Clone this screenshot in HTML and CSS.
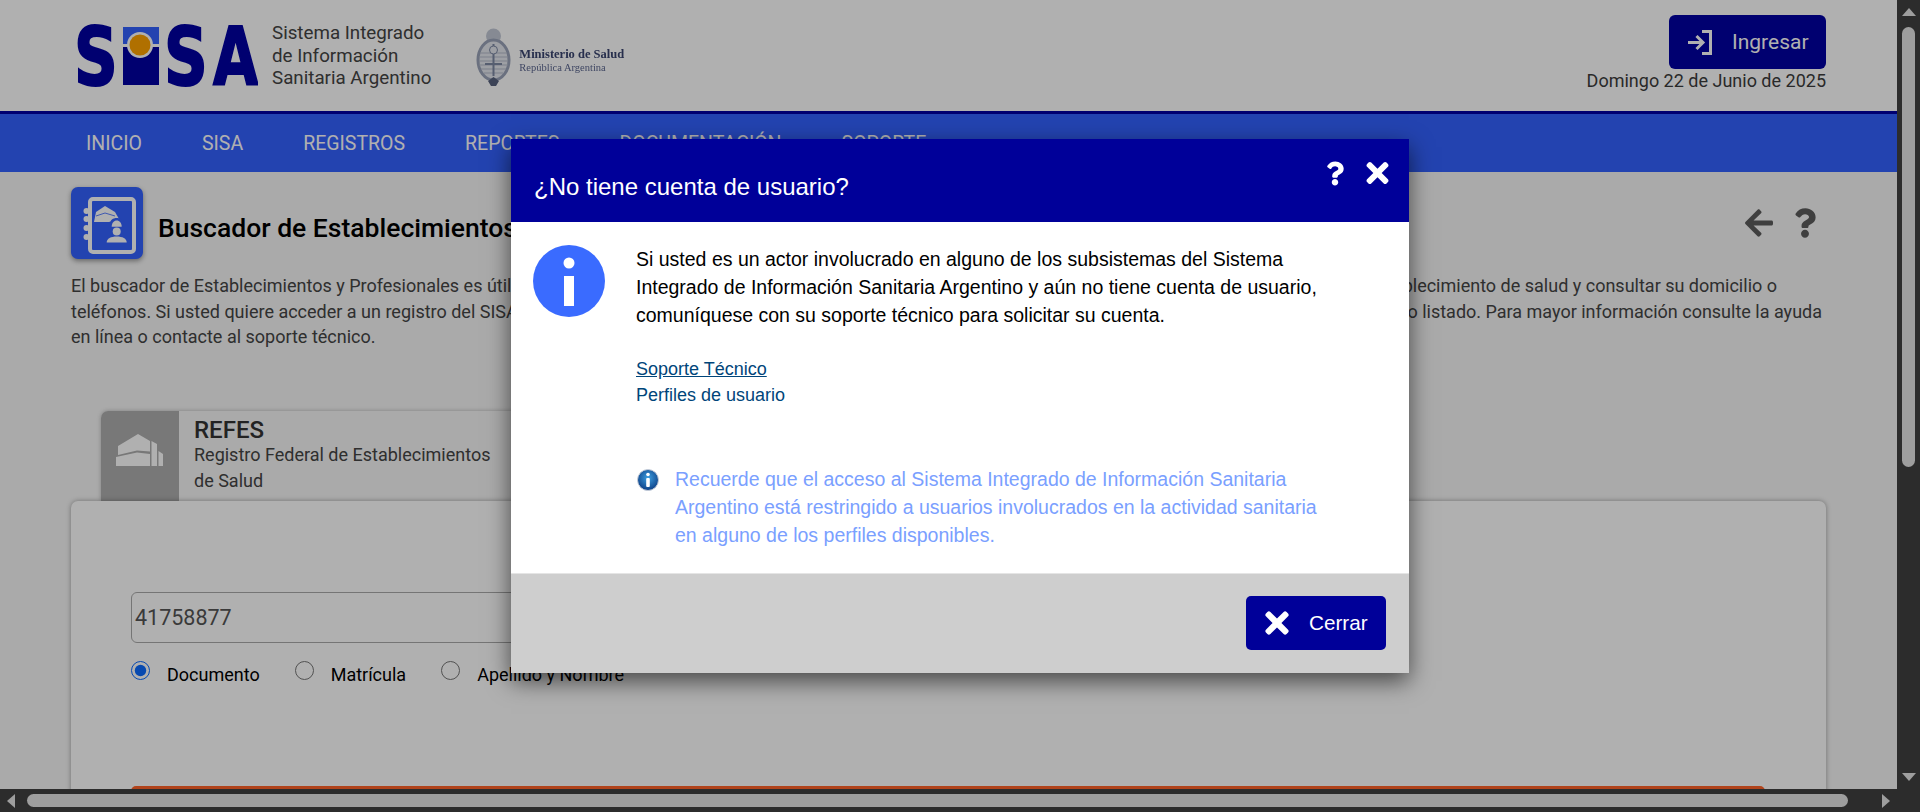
FILE: index.html
```html
<!DOCTYPE html>
<html>

<head>
    <meta charset="utf-8" />
    <title>SISA</title>
    <link rel="stylesheet" href="styles.css">
</head>

<body>
    <div class="ventana">
        <div class="pagina">
            <header class="cabecera">
                <div class="marca">
                    <svg class="logo-sisa" viewBox="-4 -20 185 100" width="185" height="100">
                        <text class="logo-letra" transform="translate(-3 59) scale(0.76 1)">S</text>
                        <rect x="46" y="1" width="36" height="17" fill="#3461ff" />
                        <rect x="46" y="21" width="36" height="38" fill="#0000a2" />
                        <circle cx="63" cy="19" r="13" fill="#fff" />
                        <circle cx="63" cy="19" r="10.5" fill="#ffa200" />
                        <text class="logo-letra" transform="translate(87 59) scale(0.76 1)">S</text>
                        <text class="logo-letra" transform="translate(136 59) scale(0.73 1)">A</text>
                    </svg>
                    <div class="marca-texto">Sistema Integrado<br>de Información<br>Sanitaria Argentino</div>
                    <div class="ministerio">
                        <svg viewBox="0 0 35 59" width="35" height="59">
                            <circle cx="17.5" cy="8" r="7.5" fill="#c3c9d6" />
                            <ellipse cx="17.5" cy="32" rx="15.5" ry="20" fill="#e4e7ee" stroke="#9aa3b8" stroke-width="3" />
                            <path d="M4 25H31M3 29H32M3 33H32M3 37H32M5 41H30M8 45H27" stroke="#b3bac9" />
                            <path d="M17.5 16V48M9 36H26" stroke="#7d88a3" stroke-width="2" />
                            <circle cx="17.5" cy="22" r="4" fill="#e4e7ee" stroke="#7d88a3" />
                            <path d="M12 53L17.5 49L23 53L20 58H15Z" fill="#57617d" />
                        </svg>
                        <div class="ministerio-texto">
                            <div class="ministerio-nombre">Ministerio de Salud</div>
                            <div class="ministerio-pais">República Argentina</div>
                        </div>
                    </div>
                </div>
                <div class="sesion">
                    <a class="boton-ingresar">
                        <svg viewBox="0 0 25 25" width="25" height="25" fill="none" stroke="#fff" stroke-width="3">
                            <path d="M1 12.5H15M9.5 6L16 12.5L9.5 19" />
                            <path d="M15 1.5H23.5V23.5H15" />
                        </svg>
                        Ingresar
                    </a>
                    <div class="fecha">Domingo 22 de Junio de 2025</div>
                </div>
            </header>

            <nav class="menu">
                <a>INICIO</a>
                <a>SISA</a>
                <a>REGISTROS</a>
                <a>REPORTES</a>
                <a>DOCUMENTACIÓN</a>
                <a>SOPORTE</a>
            </nav>

            <main class="contenido">
                <div class="titulo-fila">
                    <div class="titulo-icono">
                        <svg viewBox="0 0 72 72" width="72" height="72">
                            <rect x="19" y="12" width="44" height="53" rx="3" fill="none" stroke="#fff" stroke-width="4" />
                            <circle cx="15.5" cy="24" r="3" fill="#fff" />
                            <circle cx="15.5" cy="32" r="3" fill="#fff" />
                            <circle cx="15.5" cy="41" r="3" fill="#fff" />
                            <circle cx="15.5" cy="50" r="3" fill="#fff" />
                            <path d="M23 35L25 25L34 19L44 25L48 32L38 35Z" fill="#fff" />
                            <path d="M25 29L34 26L44 29" fill="none" stroke="#3461ff" stroke-width="0.8" />
                            <path d="M39 40.5V37C39 33 42 31 45.7 31C49.5 31 52.5 33 52.5 37V40.5Z" fill="#3461ff" />
                            <path d="M40.7 39.7C40.7 36 43 33.5 45.7 33.5C48.5 33.5 50.7 36 50.7 39.7Z" fill="#fff" />
                            <circle cx="45.7" cy="44.5" r="4" fill="#fff" />
                            <path d="M35.7 55.5C35.7 51.5 40 49.5 45.7 49.5C51.5 49.5 55.7 51.5 55.7 55.5Z" fill="#fff" />
                        </svg>
                    </div>
                    <h1 class="titulo">Buscador de Establecimientos y Profesionales</h1>
                    <div class="titulo-acciones">
                        <svg viewBox="0 0 448 512" width="28" height="32">
                            <path fill="#5c5c5c" d="M257.5 445.1l-22.2 22.2c-9.4 9.4-24.6 9.4-33.9 0L7 273c-9.4-9.4-9.4-24.6 0-33.9L201.4 44.7c9.4-9.4 24.6-9.4 33.9 0l22.2 22.2c9.5 9.5 9.3 25-.4 34.3L136.6 216H424c13.3 0 24 10.7 24 24v32c0 13.3-10.7 24-24 24H136.6l120.5 114.8c9.8 9.3 10 24.8.4 34.3z" />
                        </svg>
                        <svg viewBox="0 0 384 512" width="22" height="30">
                            <path fill="#5c5c5c" d="M202.021 0C122.202 0 70.503 32.703 29.914 91.026c-7.363 10.58-5.093 25.086 5.178 32.874l43.138 32.709c10.373 7.865 25.132 6.026 33.253-4.148 25.049-31.381 43.63-49.449 82.757-49.449 30.764 0 68.816 19.799 68.816 49.631 0 22.552-18.617 34.134-48.993 51.164-35.423 19.86-82.299 44.576-82.299 106.405V320c0 13.255 10.745 24 24 24h72.471c13.255 0 24-10.745 24-24v-5.773c0-42.86 125.268-44.645 125.268-160.627C377.504 66.256 286.902 0 202.021 0zM192 373.459c-38.196 0-69.271 31.075-69.271 69.271 0 38.195 31.075 69.27 69.271 69.27s69.271-31.075 69.271-69.271-31.075-69.27-69.271-69.27z" />
                        </svg>
                    </div>
                </div>

                <div class="intro">
                    <div class="intro-linea linea-1"><span>El buscador de Establecimientos y Profesionales es útil</span><span>blecimiento de salud y consultar su domicilio o</span></div>
                    <div class="intro-linea linea-2"><span>teléfonos. Si usted quiere acceder a un registro del SISA</span><span>o listado. Para mayor información consulte la ayuda</span></div>
                    <div class="intro-linea"><span>en línea o contacte al soporte técnico.</span></div>
                </div>

                <div class="pestana">
                    <div class="pestana-icono">
                        <svg viewBox="0 0 78 90" width="78" height="90">
                            <path d="M17 35L37 23L49 30V40.5L36 39.5L17 44Z" fill="#fff" />
                            <path d="M15 46L36 41.5L49 43V55H15Z" fill="#fff" />
                            <path d="M50.5 30L56 33V55H50.5Z" fill="#fff" />
                            <path d="M57.5 40L62 43V55H57.5Z" fill="#fff" />
                        </svg>
                    </div>
                    <div class="pestana-texto">
                        <div class="pestana-nombre">REFES</div>
                        <div>Registro Federal de Establecimientos<br>de Salud</div>
                    </div>
                </div>

                <section class="tarjeta">
                    <input class="campo" value="41758877">
                    <div class="opciones">
                        <label class="opcion"><input type="radio" name="tipo" checked>Documento</label>
                        <label class="opcion"><input type="radio" name="tipo">Matrícula</label>
                        <label class="opcion"><input type="radio" name="tipo">Apellido y Nombre</label>
                    </div>
                    <div class="boton-buscar"></div>
                </section>
            </main>

            <div class="velo"></div>

            <div class="modal">
                <div class="modal-cabecera">
                    <h2 class="modal-titulo">¿No tiene cuenta de usuario?</h2>
                    <div class="modal-acciones">
                        <svg viewBox="0 0 384 512" width="18" height="25">
                            <path fill="#fff" d="M202.021 0C122.202 0 70.503 32.703 29.914 91.026c-7.363 10.58-5.093 25.086 5.178 32.874l43.138 32.709c10.373 7.865 25.132 6.026 33.253-4.148 25.049-31.381 43.63-49.449 82.757-49.449 30.764 0 68.816 19.799 68.816 49.631 0 22.552-18.617 34.134-48.993 51.164-35.423 19.86-82.299 44.576-82.299 106.405V320c0 13.255 10.745 24 24 24h72.471c13.255 0 24-10.745 24-24v-5.773c0-42.86 125.268-44.645 125.268-160.627C377.504 66.256 286.902 0 202.021 0zM192 373.459c-38.196 0-69.271 31.075-69.271 69.271 0 38.195 31.075 69.27 69.271 69.27s69.271-31.075 69.271-69.271-31.075-69.27-69.271-69.27z" />
                        </svg>
                        <svg viewBox="0 0 352 512" width="23" height="32">
                            <path fill="#fff" d="M242.72 256l100.07-100.07c12.28-12.28 12.28-32.19 0-44.48l-22.24-22.24c-12.28-12.28-32.19-12.28-44.48 0L176 189.28 75.93 89.21c-12.28-12.28-32.19-12.28-44.48 0L9.21 111.45c-12.28 12.28-12.28 32.19 0 44.48L109.28 256 9.21 356.07c-12.28 12.28-12.28 32.19 0 44.48l22.24 22.24c12.28 12.28 32.2 12.28 44.48 0L176 322.72l100.07 100.07c12.28 12.28 32.2 12.28 44.48 0l22.24-22.24c12.28-12.28 12.28-32.19 0-44.48L242.72 256z" />
                        </svg>
                    </div>
                </div>
                <div class="modal-cuerpo">
                    <svg class="info-grande" viewBox="0 0 72 72" width="72" height="72">
                        <circle cx="36" cy="36" r="36" fill="#3a6bff" />
                        <circle cx="36" cy="18" r="5.5" fill="#fff" />
                        <rect x="31" y="31" width="10" height="30" fill="#fff" />
                    </svg>
                    <div class="modal-contenido">
                        <p class="modal-mensaje">Si usted es un actor involucrado en alguno de los subsistemas del Sistema Integrado de Información Sanitaria Argentino y aún no tiene cuenta de usuario, comuníquese con su soporte técnico para solicitar su cuenta.</p>
                        <div class="modal-enlaces">
                            <a class="enlace-subrayado">Soporte Técnico</a>
                            <a>Perfiles de usuario</a>
                        </div>
                        <div class="modal-aviso">
                            <svg class="info-chica" viewBox="0 0 24 24" width="24" height="24">
                                <defs>
                                    <radialGradient id="brillo" cx="50%" cy="40%" r="60%">
                                        <stop offset="0" stop-color="#3d9ee0" />
                                        <stop offset="1" stop-color="#0c3f86" />
                                    </radialGradient>
                                </defs>
                                <circle cx="12" cy="12" r="10.5" fill="url(#brillo)" stroke="#c5ccd8" />
                                <circle cx="12" cy="6.5" r="1.8" fill="#fff" />
                                <rect x="10.2" y="10" width="3.6" height="9" rx="1" fill="#fff" />
                            </svg>
                            <p>Recuerde que el acceso al Sistema Integrado de Información Sanitaria Argentino está restringido a usuarios involucrados en la actividad sanitaria en alguno de los perfiles disponibles.</p>
                        </div>
                    </div>
                </div>
                <div class="modal-pie">
                    <a class="boton-cerrar">
                        <svg viewBox="0 0 352 512" width="24" height="34">
                            <path fill="#fff" d="M242.72 256l100.07-100.07c12.28-12.28 12.28-32.19 0-44.48l-22.24-22.24c-12.28-12.28-32.19-12.28-44.48 0L176 189.28 75.93 89.21c-12.28-12.28-32.19-12.28-44.48 0L9.21 111.45c-12.28 12.28-12.28 32.19 0 44.48L109.28 256 9.21 356.07c-12.28 12.28-12.28 32.19 0 44.48l22.24 22.24c12.28 12.28 32.2 12.28 44.48 0L176 322.72l100.07 100.07c12.28 12.28 32.2 12.28 44.48 0l22.24-22.24c12.28-12.28 12.28-32.19 0-44.48L242.72 256z" />
                        </svg>
                        Cerrar
                    </a>
                </div>
            </div>
        </div>

        <div class="barra-v">
            <span class="flecha flecha-arriba"></span>
            <span class="pulgar-v"></span>
            <span class="flecha flecha-abajo"></span>
        </div>
        <div class="barra-h">
            <span class="flecha flecha-izq"></span>
            <span class="pulgar-h"></span>
            <span class="flecha flecha-der"></span>
        </div>
        <div class="esquina"></div>
    </div>
</body>

</html>
```

FILE: styles.css
```css
* {
    box-sizing: border-box;
}

body {
    margin: 0;
    overflow: hidden;
    font-family: Roboto, sans-serif;
}

.ventana {
    display: grid;
    grid-template-columns: 1897px 23px;
    grid-template-rows: 789px 23px;
    width: 1920px;
    height: 812px;
    background-color: #2c2c2c;
}

.pagina {
    position: relative;
    overflow: hidden;
    background-color: #f6f6f6;
}

/* cabecera */
.cabecera {
    display: flex;
    justify-content: space-between;
    height: 114px;
    padding: 0 71px 0 73px;
    background-color: #fff;
    border-bottom: 3px solid #0000a2;
}

.marca {
    display: flex;
    align-items: flex-start;
    padding-top: 26px;
}

.logo-sisa {
    margin-top: -20px;
}

.logo-letra {
    font-family: "DejaVu Sans", sans-serif;
    font-weight: bold;
    font-size: 80px;
    fill: #0000a2;
    stroke: #0000a2;
    stroke-width: 2px;
}

.marca-texto {
    margin-left: 14px;
    margin-top: -4px;
    font-size: 18.75px;
    line-height: 22.5px;
    color: #444;
}

.ministerio {
    display: flex;
    align-items: center;
    margin-left: 45px;
    margin-top: 2px;
    filter: blur(0.4px);
}

.ministerio-texto {
    margin-left: 8px;
    padding-top: 4px;
    font-family: "Liberation Serif", serif;
    color: #3a4570;
}

.ministerio-nombre {
    font-size: 12.5px;
    font-weight: bold;
}

.ministerio-pais {
    font-size: 10.5px;
    color: #5d6890;
}

.sesion {
    display: flex;
    flex-direction: column;
    align-items: flex-end;
    padding-top: 15px;
}

.boton-ingresar {
    display: flex;
    align-items: center;
    gap: 20px;
    width: 157px;
    height: 54px;
    padding-left: 18px;
    border-radius: 6px;
    background-color: #0000a2;
    color: #fff;
    font-size: 21px;
}

.fecha {
    margin-top: 1px;
    font-size: 18px;
    line-height: 22px;
    color: #3c3c3c;
}

/* menu */
.menu {
    display: flex;
    align-items: center;
    gap: 60px;
    height: 58px;
    padding-left: 86px;
    background-color: #3461ff;
    color: #fff;
    font-size: 19.5px;
}

/* contenido */
.contenido {
    padding: 15px 71px 0;
}

.titulo-fila {
    display: flex;
    align-items: center;
}

.titulo-icono {
    width: 72px;
    height: 72px;
    border-radius: 7px;
    background-color: #3461ff;
    box-shadow: 0 2px 5px rgba(0, 0, 0, 0.4);
}

.titulo {
    margin: 8px 0 0 15px;
    font-size: 26.5px;
    font-weight: 500;
    color: #000;
}

.titulo-acciones {
    display: flex;
    align-items: center;
    gap: 21px;
    margin-left: auto;
    margin-right: 10px;
}

.intro {
    margin-top: 14px;
    font-size: 18px;
    line-height: 25.5px;
    color: #444;
}

.intro-linea {
    display: flex;
    justify-content: space-between;
}

.linea-1 {
    padding-right: 49px;
}

.linea-2 {
    padding-right: 4px;
}

.pestana {
    display: flex;
    width: 420px;
    height: 90px;
    margin: 61px 0 0 30px;
    border-radius: 7px 0 0 0;
    background-color: #f6f6f6;
    box-shadow: 0 0 4px rgba(0, 0, 0, 0.25);
    overflow: hidden;
}

.pestana-icono {
    width: 78px;
    background-color: #aeaeae;
}

.pestana-texto {
    margin-left: 15px;
    font-size: 18px;
    line-height: 26px;
    color: #444;
}

.pestana-nombre {
    margin-top: 7px;
    font-size: 24px;
    line-height: 24px;
    font-weight: 500;
    color: #333;
}

.tarjeta {
    position: relative;
    height: 400px;
    padding: 91px 61px 0 60px;
    border-radius: 7px;
    background-color: #fff;
    box-shadow: 0 0 5px rgba(0, 0, 0, 0.35);
}

.campo {
    display: block;
    width: 800px;
    height: 51px;
    padding: 0 3px;
    border: 1px solid #aaa;
    border-radius: 6px;
    font-family: Roboto, sans-serif;
    font-size: 21.5px;
    color: #555;
}

.opciones {
    display: flex;
    gap: 35px;
    margin-top: 18px;
}

.opcion {
    display: flex;
    font-size: 18px;
    line-height: 28px;
    color: #000;
}

.opcion input {
    width: 19px;
    height: 19px;
    margin: 0 17px 0 0;
    accent-color: #0b6bff;
}

.boton-buscar {
    height: 60px;
    margin-top: 97px;
    border-radius: 5px;
    background-color: #ff6228;
}

/* modal */
.velo {
    position: absolute;
    top: 0;
    right: 0;
    bottom: 0;
    left: 0;
    background-color: rgba(0, 0, 0, 0.31);
}

.modal {
    position: absolute;
    top: 139px;
    left: 511px;
    width: 898px;
    font-family: "Liberation Sans", Arial, sans-serif;
    background-color: #fff;
    box-shadow: 0 8px 22px rgba(0, 0, 0, 0.6);
}

.modal-cabecera {
    display: flex;
    justify-content: space-between;
    height: 83px;
    padding: 0 20px 0 23px;
    background-color: #000099;
    color: #fff;
}

.modal-titulo {
    margin: 34px 0 0;
    font-size: 24px;
    font-weight: normal;
}

.modal-acciones {
    display: flex;
    align-items: center;
    gap: 22px;
    height: 68px;
}

.modal-cuerpo {
    display: flex;
    height: 351px;
    padding: 23px 0 0 22px;
}

.info-grande {
    flex: none;
}

.modal-contenido {
    width: 700px;
    margin-left: 31px;
}

.modal-mensaje {
    margin: 0;
    font-size: 19.5px;
    line-height: 28px;
    color: #000;
}

.modal-enlaces {
    display: flex;
    flex-direction: column;
    margin-top: 27px;
    font-size: 18px;
    line-height: 26px;
    color: #00457a;
}

.enlace-subrayado {
    text-decoration: underline;
}

.modal-aviso {
    display: flex;
    margin-top: 57px;
    color: #7aa0ff;
    font-size: 19.5px;
    line-height: 28px;
}

.info-chica {
    flex: none;
    margin: 3px 15px 0 0;
}

.modal-aviso p {
    margin: 0;
    width: 655px;
}

.modal-pie {
    display: flex;
    justify-content: flex-end;
    padding: 22px 23px 23px;
    border-top: 1px solid #e5e5e5;
    background-color: #cecece;
}

.boton-cerrar {
    display: flex;
    align-items: center;
    gap: 20px;
    width: 140px;
    height: 54px;
    padding-left: 19px;
    border-radius: 5px;
    background-color: #000099;
    color: #fff;
    font-size: 20.7px;
}

/* barras de scroll */
.barra-v {
    display: flex;
    flex-direction: column;
    align-items: center;
    padding: 8px 0;
}

.pulgar-v {
    width: 13px;
    height: 440px;
    margin-top: 11px;
    border-radius: 7px;
    background-color: #9e9e9e;
}

.barra-h {
    display: flex;
    align-items: center;
    padding: 0 7px;
}

.pulgar-h {
    width: 1821px;
    height: 13px;
    margin-left: 12px;
    border-radius: 7px;
    background-color: #9e9e9e;
}

.flecha {
    width: 0;
    height: 0;
    border-style: solid;
    border-color: transparent;
}

.flecha-arriba {
    border-width: 0 7.5px 8px;
    border-bottom-color: #9e9e9e;
}

.flecha-abajo {
    margin-top: auto;
    border-width: 8px 7.5px 0;
    border-top-color: #9e9e9e;
}

.flecha-izq {
    border-width: 7.5px 8px 7.5px 0;
    border-right-color: #9e9e9e;
}

.flecha-der {
    margin-left: auto;
    border-width: 7.5px 0 7.5px 8px;
    border-left-color: #9e9e9e;
}
```
